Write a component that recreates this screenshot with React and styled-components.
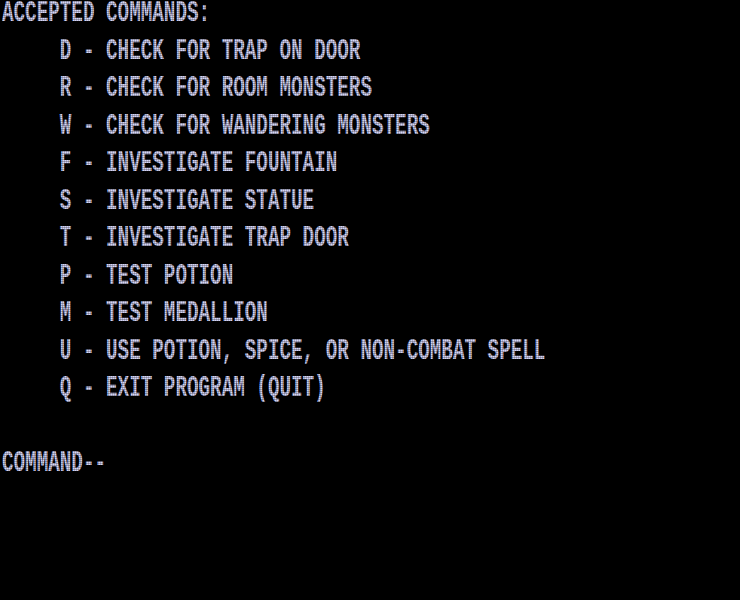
import React from 'react';
import styled, { createGlobalStyle } from 'styled-components';

const lines = [
  'ACCEPTED COMMANDS:',
  '     D - CHECK FOR TRAP ON DOOR',
  '     R - CHECK FOR ROOM MONSTERS',
  '     W - CHECK FOR WANDERING MONSTERS',
  '     F - INVESTIGATE FOUNTAIN',
  '     S - INVESTIGATE STATUE',
  '     T - INVESTIGATE TRAP DOOR',
  '     P - TEST POTION',
  '     M - TEST MEDALLION',
  '     U - USE POTION, SPICE, OR NON-COMBAT SPELL',
  '     Q - EXIT PROGRAM (QUIT)',
  '',
  'COMMAND--',
];

const GlobalStyle = createGlobalStyle`
  html, body {
    margin: 0;
    padding: 0;
    background: #000;
  }
`;

const Screen = styled.div`
  position: relative;
  width: 740px;
  height: 600px;
  padding-left: 2px;
  box-sizing: border-box;
  background: #000;
  overflow: hidden;
`;

const Row = styled.div`
  height: 37.5px;
  display: flex;
  align-items: flex-start;
  white-space: pre;
`;

const Text = styled.span`
  display: inline-block;
  margin-top: -1px;
  font-family: "Liberation Mono", monospace;
  font-weight: bold;
  font-size: 19.27px;
  line-height: 1;
  color: #d4d4f6;
  transform: scaleY(1.57);
  transform-origin: 0 0;
`;

// faint dot mask, like the phosphor grid of the old screen
const Mask = styled.div`
  position: absolute;
  inset: 0;
  pointer-events: none;
  background:
    repeating-linear-gradient(0deg, rgba(0,0,0,0.25) 0 1px, transparent 1px 2px),
    repeating-linear-gradient(90deg, rgba(0,0,0,0.18) 0 1px, transparent 1px 2px);
`;

export default function App() {
  return (
    <>
      <GlobalStyle />
      <Screen>
        {lines.map((line, i) => (
          <Row key={i}>
            <Text>{line}</Text>
          </Row>
        ))}
        <Mask />
      </Screen>
    </>
  );
}
